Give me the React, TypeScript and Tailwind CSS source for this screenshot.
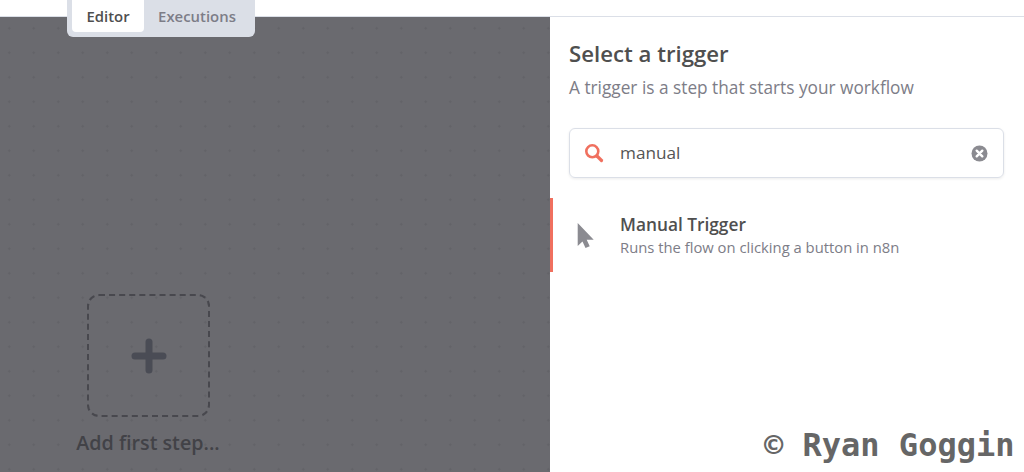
import React from "react";

export default function App() {
  return (
    <div className="relative flex h-[472px] w-[1024px] flex-col overflow-hidden bg-white font-['Open_Sans',sans-serif]">
      <div className="h-[17px] shrink-0 border-b border-[#dbdfe7] bg-white" />
      <div className="flex min-h-0 flex-1">
        <div className="relative w-[550px] shrink-0 bg-[#6a6a6f] bg-[radial-gradient(circle,#626267_1px,transparent_1.2px)] bg-size-[24.5px_24.5px] bg-position-[-3px_-1px]">
          <div className="absolute left-[87px] top-[277px] flex h-[123px] w-[123px] items-center justify-center rounded-[12px] border-2 border-dashed border-[#48484e]">
            <svg width="36" height="36" viewBox="0 0 36 36" aria-hidden="true">
              <path d="M18 4v28M4 18h28" stroke="#4a4c55" strokeWidth="7" strokeLinecap="round" />
            </svg>
          </div>
          <div className="absolute left-[48px] top-[414px] w-[200px] text-center text-[19.7px] font-semibold leading-6 text-[#424247]">
            Add first step...
          </div>
        </div>
        <div className="flex min-w-0 flex-1 flex-col bg-white">
          <div className="px-[19px] pt-[22px]">
            <div className="text-[22.2px] font-semibold leading-[30px] text-[#4f4f4f]">Select a trigger</div>
            <div className="mt-[7px] text-[17.25px] leading-[24px] text-[#7d7d87]">A trigger is a step that starts your workflow</div>
            <div className="mt-[28px] flex h-[50px] w-[435px] items-center rounded-md border border-[#dbdfe7] pl-[15px] pr-[15px] shadow-[0_1px_3px_rgba(0,0,0,0.08)]">
              <svg width="20" height="20" viewBox="0 0 20 20" aria-hidden="true" className="-ml-px shrink-0">
                <circle cx="8.3" cy="8.3" r="6" fill="none" stroke="#f0705f" strokeWidth="2.6" />
                <path d="M13 13l4.5 4.5" stroke="#f0705f" strokeWidth="3.2" strokeLinecap="round" />
              </svg>
              <span className="ml-[16px] flex-1 text-[17.2px] text-[#555555]">manual</span>
              <svg width="17" height="17" viewBox="0 0 17 17" aria-hidden="true" className="shrink-0">
                <circle cx="8.5" cy="8.5" r="8" fill="#8b8b91" />
                <path d="M5.7 5.7l5.6 5.6M11.3 5.7l-5.6 5.6" stroke="#fff" strokeWidth="2.4" strokeLinecap="round" />
              </svg>
            </div>
          </div>
          <div className="mt-[20px] flex h-[74px] items-center border-l-[3px] border-[#f0705f]">
            <svg width="20" height="28" viewBox="0 0 20 28" aria-hidden="true" className="ml-[23px] shrink-0">
              <path d="M1.7 2v23l4.8-4.6 3 6.6 4.2-1.8-3-6.4h7z" fill="#8b8b91" />
            </svg>
            <div className="ml-[24px]">
              <div className="pt-px text-[17.3px] font-semibold leading-[24px] text-[#4f4f4f]">Manual Trigger</div>
              <div className="text-[14.8px] leading-[21px] text-[#7d7d87]">Runs the flow on clicking a button in n8n</div>
            </div>
          </div>
        </div>
      </div>
      <div className="absolute left-[67px] top-0 flex h-[37px] w-[188px] items-start rounded-b-md bg-[#dbdfe7] px-[5px]">
        <div className="flex h-[32px] w-[72px] items-center justify-center rounded-b-[4px] bg-white text-[14.9px] font-semibold text-[#4f4f4f]">Editor</div>
        <div className="flex h-[32px] flex-1 items-center justify-center text-[14.9px] font-semibold text-[#7d7d87]">Executions</div>
      </div>
      <div className="absolute left-[764px] top-[426px] whitespace-nowrap font-['DejaVu_Sans_Mono',monospace] text-[32px] font-bold leading-[38px] text-[#666666]">
        © Ryan Goggin
      </div>
    </div>
  );
}
